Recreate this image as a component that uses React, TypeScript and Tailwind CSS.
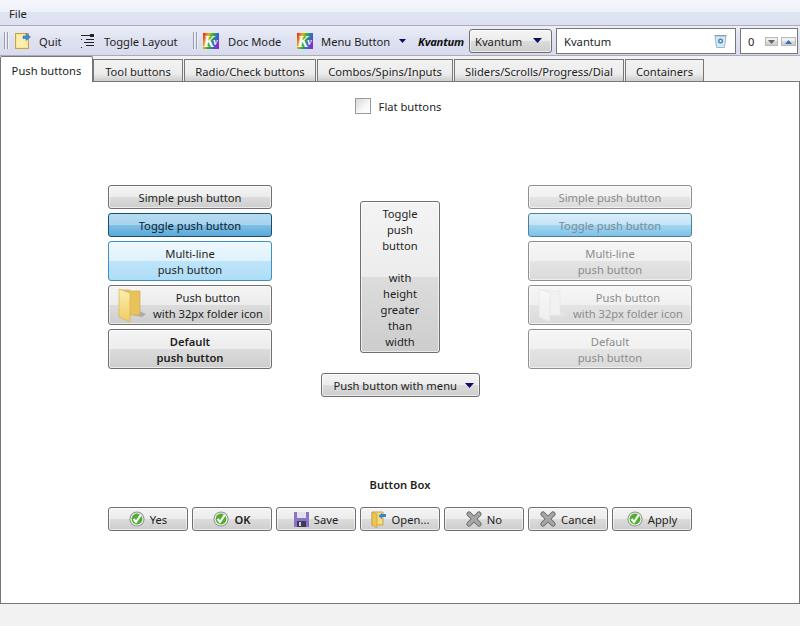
import React from 'react';

const FONT = "font-['Noto_Sans',sans-serif]";

const BTN =
  'rounded-[3px] border border-[#6f6f6f] bg-[linear-gradient(to_bottom,#f4f4f4_0%,#ececec_50%,#dcdcdc_50%,#cdcdcd_100%)] shadow-[inset_0_0_0_1px_rgba(255,255,255,0.6)] text-[#1e1e1e]';
const BTN_OFF =
  'rounded-[3px] border border-[#8f8f8f] bg-[linear-gradient(to_bottom,#f6f6f6_0%,#f0f0f0_50%,#e4e4e4_50%,#dadada_100%)] shadow-[inset_0_0_0_1px_rgba(255,255,255,0.6)] text-[#8c8c8c]';
const SPIN =
  'flex h-[9px] items-center justify-center border border-[#b8b8b8] bg-[linear-gradient(to_bottom,#f4f4f4_0%,#ececec_50%,#dcdcdc_50%,#cdcdcd_100%)]';

function KvLogo({ id }: { id: string }) {
  return (
    <svg width="16" height="16" viewBox="0 0 16 16">
      <defs>
        <linearGradient id={id} x1="0" y1="0.2" x2="1" y2="0.6">
          <stop offset="0" stopColor="#e8331c" />
          <stop offset="0.25" stopColor="#eeb01c" />
          <stop offset="0.5" stopColor="#35b02a" />
          <stop offset="0.75" stopColor="#2a6fd0" />
          <stop offset="1" stopColor="#8a2bc8" />
        </linearGradient>
      </defs>
      <rect width="16" height="16" fill={`url(#${id})`} />
      <text x="0.5" y="13.5" fontSize="16" fontWeight="700" fontStyle="italic" fontFamily="Liberation Serif" fill="#fff">
        K<tspan fontSize="10" dy="-1.5" dx="-1">v</tspan>
      </text>
    </svg>
  );
}

function QuitIcon() {
  return (
    <svg width="16" height="17" viewBox="0 0 16 17">
      <rect x="0.5" y="1.5" width="13" height="15" fill="#f8e58f" stroke="#c9a24a" />
      <path d="M2 3h10v12H2z" fill="#fbeeaf" />
      <path d="M8 4h3V1.5L15.5 5 11 8.5V6.5H8z" fill="#3b8fe0" stroke="#1f5fa8" strokeWidth="0.5" />
    </svg>
  );
}

function LayoutIcon() {
  return (
    <svg width="14" height="14" viewBox="0 0 14 14" fill="#222">
      <rect x="0" y="1" width="9" height="1" />
      <rect x="9" y="0" width="4" height="3" />
      <rect x="5" y="5" width="8" height="1" />
      <rect x="3" y="8" width="10" height="1" />
      <rect x="5" y="11" width="8" height="1" />
      <rect x="0" y="13" width="1" height="1" />
      <rect x="0" y="5" width="1" height="1" />
    </svg>
  );
}

function Check() {
  return (
    <svg width="16" height="16" viewBox="0 0 16 16">
      <circle cx="8" cy="8" r="7.6" fill="#8f8f8f" />
      <circle cx="8" cy="8" r="6.6" fill="#e8efe4" />
      <circle cx="8" cy="8" r="5.4" fill="#4fb02f" />
      <path d="M4.6 8l2.4 3 4.6-6.8" fill="none" stroke="#fff" strokeWidth="2.1" />
    </svg>
  );
}

function Cross() {
  return (
    <svg width="16" height="16" viewBox="0 0 16 16">
      <path d="M3 3l10 10M13 3L3 13" stroke="#666" strokeWidth="5" strokeLinecap="round" />
      <path d="M3 3l10 10M13 3L3 13" stroke="#a6a6a6" strokeWidth="3.4" strokeLinecap="round" />
    </svg>
  );
}

function Floppy() {
  return (
    <svg width="15" height="15" viewBox="0 0 15 15">
      <rect width="15" height="15" fill="#8a75c4" />
      <rect x="3" y="0" width="9" height="6" fill="#e4e0f2" />
      <rect x="3" y="9" width="9" height="6" fill="#3f3a58" />
      <rect x="5" y="10" width="2" height="4" fill="#cfcfe0" />
    </svg>
  );
}

function OpenIcon() {
  return (
    <svg width="16" height="17" viewBox="0 0 16 17">
      <path d="M1 1h11v13H1z" fill="#f5dc7c" stroke="#c9a24a" />
      <path d="M1 1l5 2v14l-5-3z" fill="#ecc452" stroke="#b98f36" strokeWidth="0.5" />
      <path d="M15 3v3H11v2L7.5 5 11 2v1z" fill="#2f86dc" />
    </svg>
  );
}

function Folder({ ghost }: { ghost?: boolean }) {
  const id = ghost ? 'fold-ghost' : 'fold';
  return (
    <svg width="32" height="36" viewBox="0 0 32 36">
      <defs>
        <linearGradient id={id} x1="0" y1="0" x2="0" y2="1">
          <stop offset="0" stopColor={ghost ? '#f8f8f8' : '#fbeeb0'} />
          <stop offset="1" stopColor={ghost ? '#ededed' : '#f0cb62'} />
        </linearGradient>
      </defs>
      <path d="M12 27l13 3 4-3-7-3z" fill={ghost ? '#e6e6e6' : '#9a9a9a'} opacity="0.7" />
      <path d="M3 3h9l2 1h9v24H3z" fill={ghost ? '#f1f1f1' : '#e9c25c'} stroke={ghost ? '#e6e6e6' : '#cfa544'} strokeWidth="0.6" />
      <path d="M2 2l11 4v29L2 30z" fill={`url(#${id})`} stroke={ghost ? '#e2e2e2' : '#d4ab48'} strokeWidth="0.6" />
    </svg>
  );
}

function Arrow() {
  return (
    <svg width="9" height="5" viewBox="0 0 9 5">
      <path d="M0 0h9L4.5 5z" fill="#0d0d66" />
    </svg>
  );
}

function Handle() {
  return (
    <div className="flex gap-[1px]">
      <div className="h-[17px] w-[2px] border-l border-[#9a9db0] bg-[#f1f2f8]" />
      <div className="h-[17px] w-[2px] border-l border-[#9a9db0] bg-[#f1f2f8]" />
    </div>
  );
}

function Tab({ label, w, active }: { label: string; w: number; active?: boolean }) {
  if (active) {
    return (
      <div className="relative z-10 flex h-[26px] w-[93px] items-center justify-center rounded-t-[2px] border border-b-0 border-[#777] bg-white pt-[2px] text-[#1e1e1e]">
        {label}
      </div>
    );
  }
  return (
    <div
      className="mr-px mt-[3px] flex h-[22px] items-center justify-center border border-b-0 border-[#777] bg-[linear-gradient(to_bottom,#f2f2f2_0%,#ececec_65%,#cdcdcd_100%)] pt-[2px] text-[#1e1e1e]"
      style={{ width: w }}
    >
      {label}
    </div>
  );
}

function Lines({ a, b, bold }: { a: string; b: string; bold?: boolean }) {
  return (
    <div className={`pt-[2px] text-center leading-[16px] ${bold ? 'font-semibold' : ''}`}>
      <div>{a}</div>
      <div>{b}</div>
    </div>
  );
}

function BoxButton({ icon, label, bold }: { icon: React.ReactNode; label: string; bold?: boolean }) {
  return (
    <div className={`${BTN} flex h-6 w-20 items-center justify-center gap-[5px] ${bold ? 'font-semibold' : ''}`}>
      {icon}
      <span className="pt-[2px]">{label}</span>
    </div>
  );
}

function Column({ off }: { off?: boolean }) {
  const base = off ? BTN_OFF : BTN;
  return (
    <div className="flex w-[164px] flex-col gap-1">
      <div className={`${base} flex h-6 items-center justify-center pt-[2px]`}>Simple push button</div>
      {off ? (
        <div className="flex h-6 items-center justify-center rounded-[3px] border border-[#4f7f9f] bg-[linear-gradient(to_bottom,#d9eefa_0%,#c4e4f6_50%,#a3d6f0_50%,#7fc2e6_100%)] pt-[2px] text-[#7a8c98]">
          Toggle push button
        </div>
      ) : (
        <div className="flex h-6 items-center justify-center rounded-[3px] border border-[#15506f] bg-[linear-gradient(to_bottom,#b7dcf1_0%,#a6d3ee_50%,#7fc0e6_50%,#5ba8d8_100%)] pt-[2px] text-[#10202c]">
          Toggle push button
        </div>
      )}
      {off ? (
        <div className={`${base} flex h-10 items-center justify-center`}>
          <Lines a="Multi-line" b="push button" />
        </div>
      ) : (
        <div className="flex h-10 items-center justify-center rounded-[3px] border border-[#3f8fc4] bg-[linear-gradient(to_bottom,#eef8fe_0%,#dff2fc_50%,#bfe5fa_50%,#aeddf7_100%)] text-[#1e1e1e]">
          <Lines a="Multi-line" b="push button" />
        </div>
      )}
      <div className={`${base} flex h-10 items-center pl-2 pr-1`}>
        <Folder ghost={off} />
        <div className="flex-1">
          <Lines a="Push button" b="with 32px folder icon" />
        </div>
      </div>
      <div className={`${base} flex h-10 items-center justify-center`}>
        <Lines a="Default" b="push button" bold={!off} />
      </div>
    </div>
  );
}

export default function App() {
  return (
    <div className={`${FONT} flex h-[626px] w-[800px] flex-col overflow-hidden whitespace-nowrap bg-[#f2f2f2] text-[11.2px] leading-4 text-[#1e1e1e]`}>
      {/* menu bar */}
      <div className="flex h-[26px] items-center border-b border-[#a9abb8] bg-[linear-gradient(to_bottom,#f6f7fd_0%,#eff1fa_50%,#dfe3f2_50%,#dde1f1_100%)] pl-[9px] pt-[2px]">
        File
      </div>

      {/* tool bar */}
      <div className="flex h-[30px] items-center border-b border-[#a9abb8] bg-[linear-gradient(to_bottom,#eceef8_0%,#dde1f0_50%,#d7dbec_100%)] pl-1">
        <Handle />
        <div className="ml-[6px]"><QuitIcon /></div>
        <span className="ml-2 w-[42px] pt-[2px]">Quit</span>
        <LayoutIcon />
        <span className="ml-[9px] w-[89px] pt-[2px]">Toggle Layout</span>
        <Handle />
        <div className="ml-[5px]"><KvLogo id="kv1" /></div>
        <span className="ml-[9px] w-[69px] pt-[2px]">Doc Mode</span>
        <KvLogo id="kv2" />
        <span className="ml-2 w-[78px] pt-[2px]">Menu Button</span>
        <svg width="7" height="4" viewBox="0 0 7 4"><path d="M0 0h7L3.5 4z" fill="#0d0d66" /></svg>
        <span className="ml-3 w-[51px] pt-[2px] font-bold italic tracking-[-0.2px] text-[#111]">Kvantum</span>
        <div className={`${BTN} flex h-6 w-[83px] items-center justify-between pl-[5px] pr-[9px]`}>
          <span className="pt-[2px]">Kvantum</span>
          <Arrow />
        </div>
        <div className="ml-1 flex h-[26px] w-[180px] items-center justify-between border border-[#777] bg-white pl-[7px] pr-[8px]">
          <span className="pt-[2px]">Kvantum</span>
          <svg width="13" height="14" viewBox="0 0 13 14">
            <path d="M1 2h11l-1.5 11.5H2.5z" fill="#d8e8f1" stroke="#9db8c8" />
            <path d="M0.5 1.5h12" stroke="#8c9ca6" />
            <circle cx="6.5" cy="7" r="2.5" fill="#3f86c8" />
            <circle cx="6.5" cy="7" r="1" fill="#fff" />
          </svg>
        </div>
        <div className="ml-1 flex h-[26px] w-[58px] items-center border border-[#777] bg-white pl-[7px]">
          <span className="w-[17px] pt-[2px]">0</span>
          <div className={`${SPIN} mt-[2px] w-[13px]`}>
            <svg width="7" height="4" viewBox="0 0 7 4"><path d="M0 0h7L3.5 4z" fill="#666" /></svg>
          </div>
          <div className={`${SPIN} ml-[3px] mt-[2px] w-[15px]`}>
            <svg width="7" height="4" viewBox="0 0 7 4"><path d="M0 4h7L3.5 0z" fill="#3a6fb0" /></svg>
          </div>
        </div>
      </div>

      {/* tabs */}
      <div className="flex h-[25px] items-start">
        <Tab label="Push buttons" w={93} active />
        <Tab label="Tool buttons" w={90} />
        <Tab label="Radio/Check buttons" w={132} />
        <Tab label="Combos/Spins/Inputs" w={136} />
        <Tab label="Sliders/Scrolls/Progress/Dial" w={170} />
        <Tab label="Containers" w={79} />
      </div>

      {/* page */}
      <div className="flex h-[523px] flex-col border border-[#777] bg-white">
        <div className="mt-[15px] flex items-center justify-center gap-2 pr-1">
          <div className="h-4 w-4 border border-[#9a9a9a] bg-[linear-gradient(135deg,#d8d8d8_0%,#f8f8f8_60%,#ffffff_100%)]" />
          <span className="pt-[2px]">Flat buttons</span>
        </div>

        <div className="mt-[70px] flex items-center justify-between px-[107px]">
          <Column />
          <div className={`${BTN} flex h-[152px] w-20 items-center justify-center pt-[2px] text-center leading-[16px]`}>
            <div>
              <div>Toggle</div>
              <div>push</div>
              <div>button</div>
              <div className="h-4" />
              <div>with</div>
              <div>height</div>
              <div>greater</div>
              <div>than</div>
              <div>width</div>
            </div>
          </div>
          <Column off />
        </div>

        <div className="mt-1 flex justify-center">
          <div className={`${BTN} flex h-6 w-[159px] items-center justify-between pl-3 pr-[5px]`}>
            <span className="pt-[2px]">Push button with menu</span>
            <Arrow />
          </div>
        </div>

        <div className="mt-20 text-center font-semibold leading-4">Button Box</div>

        <div className="mt-[14px] flex justify-center gap-1">
          <BoxButton icon={<Check />} label="Yes" />
          <BoxButton icon={<Check />} label="OK" bold />
          <BoxButton icon={<Floppy />} label="Save" />
          <BoxButton icon={<OpenIcon />} label="Open..." />
          <BoxButton icon={<Cross />} label="No" />
          <BoxButton icon={<Cross />} label="Cancel" />
          <BoxButton icon={<Check />} label="Apply" />
        </div>
      </div>
    </div>
  );
}
